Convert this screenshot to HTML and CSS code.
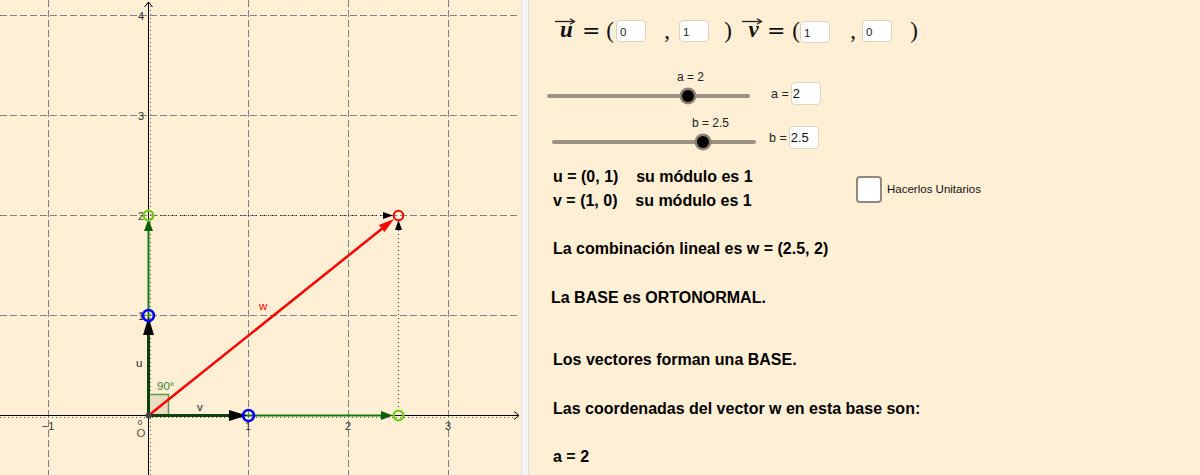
FILE: index.html
```html
<!DOCTYPE html>
<html>
<head>
<meta charset="utf-8">
<link rel="stylesheet" href="styles.css">
</head>
<body>
<div class="app">
  <div class="graph">
    <svg width="521" height="475" viewBox="0 0 521 475" xmlns="http://www.w3.org/2000/svg">
      <rect width="521" height="475" fill="#ffefd5"/>
      <g stroke="#808080" stroke-width="1" stroke-dasharray="7 3" fill="none">
        <line x1="48.5" y1="0" x2="48.5" y2="475"/>
        <line x1="248.5" y1="0" x2="248.5" y2="475"/>
        <line x1="348.5" y1="0" x2="348.5" y2="475"/>
        <line x1="448.5" y1="0" x2="448.5" y2="475"/>
        <line x1="0" y1="15.5" x2="519" y2="15.5"/>
        <line x1="0" y1="115.5" x2="519" y2="115.5"/>
        <line x1="0" y1="215.5" x2="519" y2="215.5"/>
        <line x1="0" y1="315.5" x2="519" y2="315.5"/>
      </g>
      <!-- axes -->
      <g stroke="#000" stroke-width="1" fill="none">
        <line x1="148.5" y1="475" x2="148.5" y2="2"/>
        <polyline points="144.5,7 148.5,2 152.5,7"/>
        <line x1="0" y1="415.5" x2="519" y2="415.5"/>
        <polyline points="514,411.5 519,415.5 514,419.5"/>
      </g>
      <g stroke="#000" stroke-width="1" stroke-dasharray="1 3" opacity="0.6">
        <line x1="0" y1="417.5" x2="516" y2="417.5"/>
        <line x1="150.5" y1="475" x2="150.5" y2="6"/>
      </g>
      <!-- tick labels -->
      <g font-family="'Liberation Sans', Arial, sans-serif" font-size="11" fill="#333">
        <text x="144" y="19.5" text-anchor="end">4</text>
        <text x="144" y="119.5" text-anchor="end">3</text>
        <text x="144" y="219.5" text-anchor="end">2</text>
        <text x="144" y="319.5" text-anchor="end">1</text>
        <text x="48" y="430" text-anchor="middle">−1</text>
        <text x="248" y="430" text-anchor="middle">1</text>
        <text x="348" y="430" text-anchor="middle">2</text>
        <text x="448" y="430" text-anchor="middle">3</text>
        <text x="140" y="425" text-anchor="middle" font-size="8">0</text>
        <text x="141" y="437" text-anchor="middle" font-size="11.5" fill="#555">O</text>
      </g>
      <!-- dotted projection lines -->
      <g stroke="#222" stroke-width="1" stroke-dasharray="1 3">
        <line x1="398.5" y1="230" x2="398.5" y2="409"/>
        <line x1="156" y1="215.5" x2="384" y2="215.5"/>
      </g>
      <polygon points="393,215.5 383,212 383,219" fill="#000"/>
      <polygon points="398.5,220 395,230 402,230" fill="#000"/>
      <!-- right angle -->
      <rect x="148.5" y="394.5" width="20" height="21" fill="#e9dcc3" stroke="#5a9a4a" stroke-width="1.5"/>
      <text x="157" y="390" font-family="'Liberation Sans', Arial, sans-serif" font-size="11.5" fill="#3c7f30">90°</text>
      <!-- a*u and b*v (green) -->
      <line x1="148.5" y1="415.5" x2="148.5" y2="228" stroke="#157a15" stroke-width="2"/>
      <polygon points="148.5,219 144,231 153,231" fill="#0b5e0b"/>
      <line x1="148.5" y1="415.5" x2="384" y2="415.5" stroke="#157a15" stroke-width="2"/>
      <polygon points="393,415.5 381,411 381,420" fill="#0b5e0b"/>
      <!-- u and v vectors -->
      <line x1="148.5" y1="415.5" x2="148.5" y2="332" stroke="#0c400c" stroke-width="3"/>
      <polygon points="148.5,317 143,335 154,335" fill="#000"/>
      <line x1="148.5" y1="415.5" x2="232" y2="415.5" stroke="#0c400c" stroke-width="3"/>
      <polygon points="247,415.5 229,410 229,421" fill="#000"/>
      <!-- w vector -->
      <line x1="148.5" y1="415.5" x2="386" y2="225.5" stroke="#ff0000" stroke-width="2.5"/>
      <polygon points="394,219 378.9,224.9 384.5,231.9" fill="#ff0000"/>
      <!-- points -->
      <circle cx="148.5" cy="315.5" r="5.5" fill="none" stroke="#0000ff" stroke-width="2.6"/>
      <circle cx="248.5" cy="415.5" r="5.5" fill="none" stroke="#0000ff" stroke-width="2.6"/>
      <circle cx="148.5" cy="215.5" r="4.8" fill="none" stroke="#6fcc10" stroke-width="2.3"/>
      <circle cx="398.5" cy="415.5" r="4.8" fill="none" stroke="#6fcc10" stroke-width="2.3"/>
      <circle cx="398.5" cy="215.5" r="4.8" fill="none" stroke="#ff0000" stroke-width="2"/>
      <circle cx="148.5" cy="415.5" r="3" fill="#444"/>
      <!-- labels -->
      <g font-family="'Liberation Sans', Arial, sans-serif" font-size="11.5">
        <text x="136" y="367" fill="#222">u</text>
        <text x="197" y="411" fill="#222">v</text>
        <text x="259" y="310" fill="#ff0000">w</text>
      </g>
    </svg>
  </div>
  <div class="divider"></div>
  <div class="panel">
    <div class="vecrow">
      <span class="vec"><svg class="vec-arrow" width="21" height="7" viewBox="0 0 21 7"><line x1="0" y1="3.5" x2="19" y2="3.5" stroke="#222" stroke-width="1.3"/><polyline points="15,0.8 19.5,3.5 15,6.2" fill="none" stroke="#222" stroke-width="1.3"/></svg><span class="vec-letter">u</span></span>
      <span class="op eq eq1">=</span>
      <span class="op par1">(</span>
      <span class="box b1">0</span>
      <span class="op comma1">,</span>
      <span class="box b2">1</span>
      <span class="op par2">)</span>
      <span class="vec vec2"><svg class="vec-arrow" width="21" height="7" viewBox="0 0 21 7"><line x1="0" y1="3.5" x2="19" y2="3.5" stroke="#222" stroke-width="1.3"/><polyline points="15,0.8 19.5,3.5 15,6.2" fill="none" stroke="#222" stroke-width="1.3"/></svg><span class="vec-letter">v</span></span>
      <span class="op eq eq2">=</span>
      <span class="op par3">(</span>
      <span class="box b3">1</span>
      <span class="op comma2">,</span>
      <span class="box b4">0</span>
      <span class="op par4">)</span>
    </div>

    <div class="slider-row row-a">
      <div class="slider slider-a">
        <div class="slider-label">a = 2</div>
        <div class="track"><span class="knob" style="left: 141px"></span></div>
      </div>
      <div class="field field-a"><span class="field-label">a =</span><span class="fbox">2</span></div>
    </div>

    <div class="slider-row row-b">
      <div class="slider slider-b">
        <div class="slider-label">b = 2.5</div>
        <div class="track"><span class="knob" style="left: 151px"></span></div>
      </div>
      <div class="field field-b"><span class="field-label">b =</span><span class="fbox">2.5</span></div>
    </div>

    <div class="modrow">
      <div class="modtexts">
        <div class="line">u = (0, 1)    su módulo es 1</div>
        <div class="line">v = (1, 0)    su módulo es 1</div>
      </div>
      <div class="check"><span class="checkbox"></span><span class="check-label">Hacerlos Unitarios</span></div>
    </div>

    <div class="line l-comb">La combinación lineal es w = (2.5, 2)</div>
    <div class="line l-base">La BASE es ORTONORMAL.</div>
    <div class="line l-los">Los vectores forman una BASE.</div>
    <div class="line l-las">Las coordenadas del vector w en esta base son:</div>
    <div class="line l-a">a = 2</div>
  </div>
</div>
</body>
</html>
```

FILE: styles.css
```css
html, body {
  margin: 0;
  padding: 0;
}
body {
  background: #ffefd5;
  font-family: "Liberation Sans", Arial, sans-serif;
  color: #000;
  overflow: hidden;
}
.app {
  display: flex;
  width: 1200px;
  height: 475px;
}
.graph {
  width: 521px;
  height: 475px;
  flex: none;
}
.graph svg {
  display: block;
}
.divider {
  width: 6px;
  flex: none;
  background: #f4f4f4;
  border-left: 1px solid #e2e2e2;
  border-right: 1px solid #dcdcdc;
}
.panel {
  flex: 1;
  height: 475px;
  background: #ffefd5;
}

/* vector row */
.vecrow {
  display: flex;
  align-items: center;
  height: 24px;
  margin-top: 19px;
  padding-left: 27px;
  font-family: "Liberation Serif", "Times New Roman", serif;
  font-size: 23px;
  color: #111;
}
.vec {
  display: inline-flex;
  flex-direction: column;
  align-items: center;
  width: 19px;
  position: relative;
  top: -2px;
}
.vec-arrow {
  display: block;
  margin-bottom: -6px;
}
.vec-letter {
  font-style: italic;
  font-weight: bold;
  line-height: 22px;
  padding-left: 2px;
}
.op {
  display: inline-block;
  text-align: center;
  line-height: 24px;
}
.eq {
  font-family: "DejaVu Serif", serif;
  font-size: 22px;
}
.eq1 { width: 16px; margin-left: 7px; }
.par1 { width: 8px; margin-left: 8px; }
.b1 { margin-left: 2px; }
.comma1 { width: 6px; margin-left: 18px; }
.b2 { margin-left: 9px; }
.par2 { width: 8px; margin-left: 15px; }
.vec2 { margin-left: 11px; }
.eq2 { width: 16px; margin-left: 5px; }
.par3 { width: 8px; margin-left: 9px; }
.b3 { margin-left: 0px; margin-top: 2px; }
.comma2 { width: 6px; margin-left: 20px; }
.b4 { margin-left: 6px; }
.par4 { width: 8px; margin-left: 18px; }

.box {
  display: inline-block;
  box-sizing: border-box;
  width: 30px;
  height: 22px;
  background: #fff;
  border: 1px solid #d9d2c2;
  border-radius: 4px;
  font-family: "Liberation Sans", Arial, sans-serif;
  font-size: 11.5px;
  line-height: 22px;
  padding-left: 3px;
  color: #222;
}

/* sliders */
.slider-row {
  display: flex;
  align-items: flex-start;
}
.row-a { margin-top: 27px; }
.row-b { margin-top: 11px; }
.slider {
  flex: none;
}
.slider-a { margin-left: 18px; width: 203px; }
.slider-b { margin-left: 23px; width: 204px; }
.slider-label {
  font-size: 12px;
  line-height: 14px;
  height: 14px;
  color: #222;
}
.slider-a .slider-label { padding-left: 130px; }
.slider-b .slider-label { padding-left: 140px; }
.track {
  position: relative;
  height: 4px;
  margin-top: 10px;
  background: #9b9282;
  border-radius: 2px;
}
.knob {
  position: absolute;
  top: 2px;
  width: 12px;
  height: 12px;
  margin-left: -6px;
  margin-top: -6px;
  background: #000;
  border-radius: 50%;
  box-shadow: 0 0 0 2.5px #8a8275;
}
.field {
  display: flex;
  align-items: center;
}
.field-a { margin-left: 21px; margin-top: 12px; }
.field-b { margin-left: 13px; margin-top: 10px; }
.field-label {
  font-size: 12.5px;
  color: #222;
  margin-right: 2px;
}
.fbox {
  display: inline-block;
  box-sizing: border-box;
  width: 30px;
  height: 23px;
  background: #fff;
  border: 1px solid #ddd5c5;
  border-radius: 4px;
  font-size: 13px;
  line-height: 21px;
  padding-left: 1px;
  color: #111;
}

/* text lines */
.line {
  font-size: 16px;
  font-weight: bold;
  line-height: 24px;
  height: 24px;
  padding-left: 24px;
  white-space: pre;
}
.modrow {
  display: flex;
  align-items: flex-start;
  margin-top: 16px;
}
.modtexts {
  width: 327px;
}
.check {
  display: flex;
  align-items: center;
  margin-top: 11px;
}
.checkbox {
  display: inline-block;
  box-sizing: border-box;
  width: 26px;
  height: 27px;
  background: #fff;
  border: 2px solid #8f8a80;
  border-radius: 4px;
}
.check-label {
  font-size: 11.5px;
  margin-left: 5px;
  color: #111;
  position: relative;
  top: -1px;
}
.l-comb { margin-top: 24px; }
.l-base { margin-top: 25px; padding-left: 22px; }
.l-los { margin-top: 38px; }
.l-las { margin-top: 25px; }
.l-a { margin-top: 24px; }
```
